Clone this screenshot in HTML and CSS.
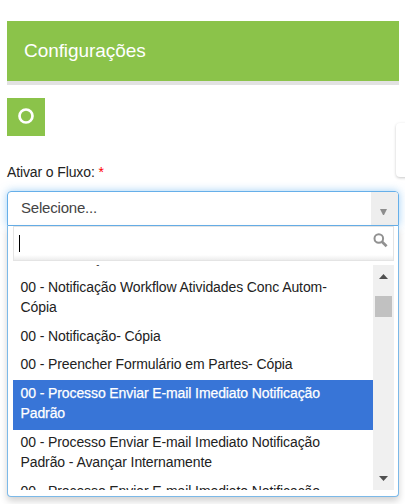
FILE: index.html
```html
<!DOCTYPE html>
<html lang="pt-BR">
<head>
<meta charset="utf-8">
<title>Configurações</title>
<link rel="stylesheet" href="styles.css">
</head>
<body>
<main class="page">
  <h1 class="header">Configurações</h1>
  <button class="square" type="button"><svg width="16" height="16" viewBox="0 0 16 16"><circle cx="8" cy="8" r="6.5" fill="none" stroke="#fff" stroke-width="2.7"/></svg></button>
  <div class="label">Ativar o Fluxo: <span class="required">*</span></div>
  <div class="select">
    <div class="choice">
      <span class="value">Selecione...</span>
      <span class="arrow"><svg width="7" height="6" viewBox="0 0 7 6"><path d="M0 0h7L4 6H3z" fill="#8d8d8d"/></svg></span>
    </div>
    <div class="drop">
      <div class="search">
        <span class="caret"></span>
        <svg class="magnifier" width="15" height="15" viewBox="0 0 15 15" fill="none" stroke="#919191"><circle cx="5.8" cy="5.5" r="4.3" stroke-width="2"/><path d="M9 8.8l4.6 4.5" stroke-width="2.7"/></svg>
      </div>
      <div class="results">
        <ul class="list">
          <li class="item">00 - Notificação</li>
          <li class="item">00 - Notificação Workflow Atividades Conc Autom-<br>Cópia</li>
          <li class="item">00 - Notificação- Cópia</li>
          <li class="item">00 - Preencher Formulário em Partes- Cópia</li>
          <li class="item active">00 - Processo Enviar E-mail Imediato Notificação<br>Padrão</li>
          <li class="item">00 - Processo Enviar E-mail Imediato Notificação<br>Padrão - Avançar Internamente</li>
          <li class="item">00 - Processo Enviar E-mail Imediato Notificação</li>
        </ul>
        <div class="scrollbar">
          <svg width="9" height="5" viewBox="0 0 9 5"><path d="M0 5L4.500 0 9 5z" fill="#505050"/></svg>
          <span class="thumb"></span>
          <svg class="down" width="9" height="5" viewBox="0 0 9 5"><path d="M0 0h9L4.500 5z" fill="#505050"/></svg>
        </div>
      </div>
    </div>
  </div>
  <aside class="side-panel"></aside>
</main>
</body>
</html>
```
FILE: styles.css
```css
* { box-sizing: border-box; }
body {
  margin: 0;
  background: #fff;
  color: #222;
  font-family: "Liberation Sans", Arial, sans-serif;
  font-size: 14px;
}
.page {
  position: relative;
  height: 504px;
  padding: 21px 6px 0 7px;
  overflow: hidden;
}
.header {
  height: 64px;
  margin: 0 0 13px;
  padding: 0 17px;
  border-bottom: 4px solid #e2e2e2;
  background: #8bc34a;
  color: #fff;
  font-size: 19px;
  font-weight: 400;
  letter-spacing: -.07px;
  line-height: 59px;
}
.square {
  display: flex;
  align-items: center;
  justify-content: center;
  width: 38px;
  height: 38px;
  padding: 0 0 2px;
  border: 0;
  background: #8bc34a;
}
.label {
  margin-top: 26px;
  height: 29px;
  letter-spacing: -.12px;
  line-height: 20px;
}
.required { color: #f00; }
.select { width: 392px; }
.choice {
  display: flex;
  justify-content: space-between;
  height: 35px;
  border: 1px solid #66afe9;
  border-radius: 4px 4px 0 0;
  box-shadow: 0 0 8px rgba(82, 168, 236, .55);
}
.value {
  padding-left: 13px;
  color: #444;
  font-size: 15px;
  letter-spacing: -.2px;
  line-height: 32px;
}
.arrow {
  display: flex;
  justify-content: center;
  width: 27px;
  padding: 17px 3px 0 0;
  border-radius: 0 3px 0 0;
  background: #eee;
}
.drop {
  position: relative;
  height: 271px;
  padding: 0 4px 0 5px;
  border: 1px solid #7cb9e8;
  border-top: 0;
  border-radius: 0 0 4px 4px;
  background: #fff;
  box-shadow: 0 4px 7px rgba(0, 0, 0, .18);
}
.search {
  display: flex;
  justify-content: space-between;
  height: 35px;
  padding: 8px 5.500px 0 5px;
  border: 1px solid #e4e4e4;
  background: linear-gradient(#fff 85%, #eee 99%);
}
.caret {
  width: 1px;
  height: 17px;
  background: #000;
}
.magnifier { margin-top: -2px; }
.results {
  display: flex;
  height: 225px;
  margin-top: 4px;
  overflow: hidden;
}
.list {
  flex: 1;
  margin: -19.800px 0 0;
  padding: 0;
  list-style: none;
}
.item {
  padding: 3px 7px 4.900px 7.500px;
  letter-spacing: -.1px;
  line-height: 20.600px;
  white-space: nowrap;
}
.item.active {
  background: #3875d7;
  box-shadow: 0 1px #3875d7;
  color: #fff;
  -webkit-text-stroke: .25px #fff;
}
.scrollbar {
  display: flex;
  flex-direction: column;
  align-items: center;
  width: 21px;
  padding: 9px 0;
  background: #f0f0f0;
}
.thumb {
  width: 17px;
  height: 21px;
  margin-top: 17px;
  background: #c1c1c1;
}
.down { margin-top: auto; }
.side-panel {
  position: absolute;
  top: 123px;
  left: 396px;
  width: 20px;
  height: 54px;
  border-radius: 4px;
  background: #fff;
  box-shadow: 0 1px 3px rgba(0, 0, 0, .22);
}
```
